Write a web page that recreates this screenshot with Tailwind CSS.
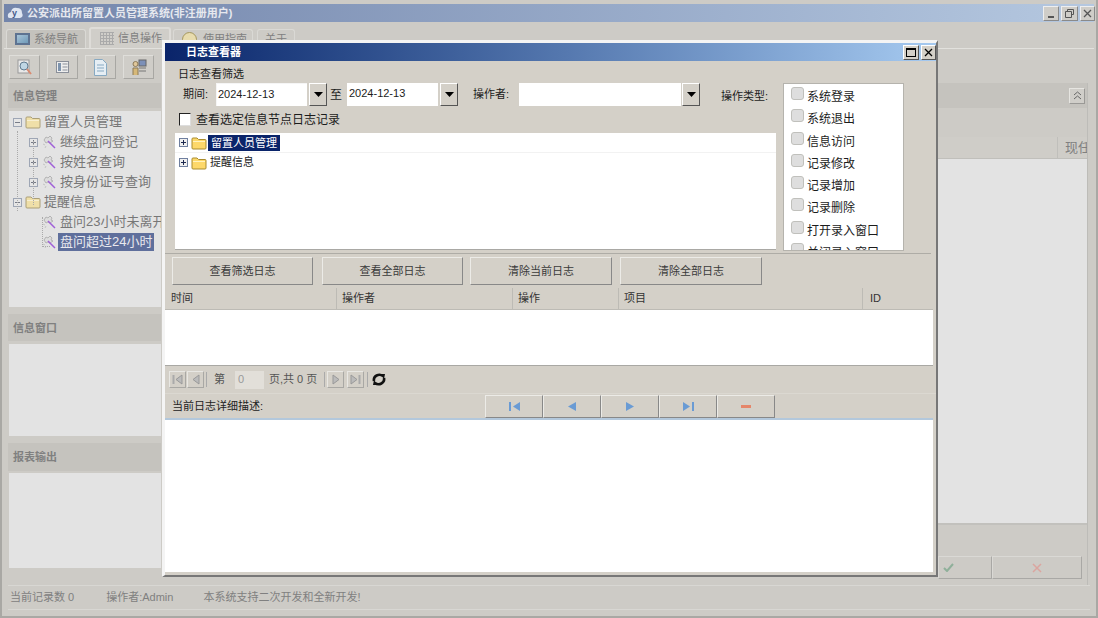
<!DOCTYPE html>
<html lang="zh-CN">
<head>
    <meta charset="UTF-8">
    <title>公安派出所留置人员管理系统</title>
    <script src="https://cdn.jsdelivr.net/npm/@tailwindcss/browser@4"></script>
</head>
<body class="w-[1098px] h-[618px] overflow-hidden bg-[#cdcbc6] text-[11px] text-[#808080] font-['Liberation_Sans','Noto_Sans_CJK_SC',sans-serif]">

<svg class="hidden">
    <symbol id="folder" viewBox="0 0 16 14">
        <path d="M1 12V3q0-1 1-1h4l1.500 1.500H14q1 0 1 1V12q0 1-1 1H2q-1 0-1-1z" fill="#fdd86a" stroke="#a98c2e"/>
        <path d="M2 5.500h12" stroke="#fff3c0"/>
    </symbol>
    <symbol id="folder-dim" viewBox="0 0 16 14">
        <path d="M1 12V3q0-1 1-1h4l1.500 1.500H14q1 0 1 1V12q0 1-1 1H2q-1 0-1-1z" fill="#efdfa8" stroke="#ab9f78"/>
        <path d="M2 5.500h12" stroke="#f7efd2"/>
    </symbol>
    <symbol id="plus" viewBox="0 0 9 9">
        <rect x=".5" y=".5" width="8" height="8" fill="#f0f0f0" stroke="#6f7f9f"/>
        <path d="M2 4.500h5M4.500 2v5" stroke="#1d2a50"/>
    </symbol>
    <symbol id="plus-dim" viewBox="0 0 9 9">
        <rect x=".5" y=".5" width="8" height="8" fill="#e6e6e6" stroke="#9ea6b5"/>
        <path d="M2 4.500h5M4.500 2v5" stroke="#777c88"/>
    </symbol>
    <symbol id="minus-dim" viewBox="0 0 9 9">
        <rect x=".5" y=".5" width="8" height="8" fill="#e6e6e6" stroke="#9ea6b5"/>
        <path d="M2 4.500h5" stroke="#777c88"/>
    </symbol>
    <symbol id="wand" viewBox="0 0 14 14">
        <path d="M2 5l2-3 2 1 2-2 2 2-1 2 2 1-3 2-2-1-2 1z" fill="#dcdcdc" stroke="#b4b4b4"/>
        <path d="M6 6l7 7" stroke="#a060d8" stroke-width="1.500"/>
        <path d="M1 9l2 1M3 13l1-2" stroke="#c4c4c4"/>
    </symbol>
    <symbol id="arrow" viewBox="0 0 9 5"><path d="M0 0h9L4.500 5z" fill="#000"/></symbol>
</svg>

<!-- 主窗口 -->
<div class="h-[618px] flex flex-col pt-[4px] px-[2px] border-x-2 border-b-2 border-[#a9a8a4]">
    <div class="h-[18px] shrink-0 flex items-center bg-gradient-to-r from-[#7385ab] to-[#b5c8e0] text-[#e6e8ee] font-bold pl-[3px]">
        <svg class="w-[17px] h-[14px] mr-[3px] shrink-0" viewBox="0 0 17 14"><path d="M1 11q-1-4 3-5 1-5 6-4 5 0 5 5 2 4-2 5H3q-2 0-2-1z" fill="#dfe6f2"/><text x="5" y="10" font-size="9" font-weight="700" fill="#44598a" font-family="Liberation Sans">y</text></svg>
        <span class="flex-1">公安派出所留置人员管理系统(非注册用户)</span>
        <div class="flex gap-[2px] mr-[-1px]">
            <div class="w-[16px] h-[15px] bg-[#cfcdc8] border border-t-[#eee] border-l-[#eee] border-r-[#8a8a8a] border-b-[#8a8a8a] flex items-end justify-center pb-[2px]"><div class="w-[6px] h-[2px] bg-[#555]"></div></div>
            <div class="w-[17px] h-[15px] bg-[#cfcdc8] border border-t-[#eee] border-l-[#eee] border-r-[#8a8a8a] border-b-[#8a8a8a] flex items-center justify-center">
                <svg class="w-[9px] h-[9px]" viewBox="0 0 9 9" fill="none" stroke="#555"><path d="M2.500 2.500V.5h6v5h-2M.5 2.500h6v6h-6z"/></svg>
            </div>
            <div class="w-[15px] h-[15px] bg-[#cfcdc8] border border-t-[#eee] border-l-[#eee] border-r-[#8a8a8a] border-b-[#8a8a8a] flex items-center justify-center">
                <svg class="w-[9px] h-[9px]" viewBox="0 0 9 9" fill="none" stroke="#555" stroke-width="1.300"><path d="M1 1l7 7M8 1l-7 7"/></svg>
            </div>
        </div>
    </div>

    <!-- 标签页 -->
    <div class="h-[21px] mt-[6px] shrink-0 flex items-end pl-[2px] border-b border-[#e2e1dd] whitespace-nowrap">
        <div class="w-[80px] h-[19px] flex items-center gap-[4px] pl-[8px] bg-[#c4c2bd] border-t border-x border-[#dad9d5] rounded-t-[3px]">
            <div class="w-[15px] h-[12px] border-2 border-[#5e7391] bg-gradient-to-br from-[#a8c4d8] to-[#6f9ab8]"></div><span>系统导航</span>
        </div>
        <div class="w-[82px] h-[21px] ml-[3px] flex items-center gap-[4px] pl-[9px] bg-[#d0cec9] border-t-2 border-x-2 border-[#dedcd8] rounded-t-[3px]">
            <div class="w-[14px] h-[13px] bg-[repeating-linear-gradient(0deg,#aaa_0_1px,transparent_1px_3px),repeating-linear-gradient(90deg,#aaa_0_1px,transparent_1px_3px)]"></div><span>信息操作</span>
        </div>
        <div class="w-[80px] h-[19px] ml-[2px] flex items-center gap-[6px] pl-[8px] border-t border-x border-[#dad9d5] rounded-t-[3px]">
            <div class="w-[15px] h-[15px] rounded-full bg-[#e8dcae] border border-[#a5975f]"></div><span>使用指南</span>
        </div>
        <div class="w-[38px] h-[19px] ml-[4px] flex items-center justify-center border-t border-x border-[#dad9d5] rounded-t-[3px]">关于</div>
    </div>

    <!-- 工具栏 -->
    <div class="h-[24px] mt-[6px] shrink-0 flex gap-[7px] pl-[5px]">
        <div class="w-[31px] bg-[#cfcdc8] border border-[#dfdeda] border-r-[#a8a7a3] border-b-[#a8a7a3] flex items-center justify-center">
            <svg class="w-[17px] h-[17px]" viewBox="0 0 17 17"><rect x="2" y="1" width="11" height="13" fill="#e8e8e8" stroke="#999"/><circle cx="8" cy="7" r="4" fill="#bfd6e4" stroke="#607b90"/><path d="M11 10l4 5" stroke="#d98a70" stroke-width="2"/></svg>
        </div>
        <div class="w-[31px] bg-[#cfcdc8] border border-[#dfdeda] border-r-[#a8a7a3] border-b-[#a8a7a3] flex items-center justify-center">
            <svg class="w-[13px] h-[12px]" viewBox="0 0 13 12"><rect x=".5" y=".5" width="12" height="11" fill="#eee" stroke="#8a8f99"/><rect x="2" y="2" width="3" height="8" fill="#7d93ad"/><path d="M6.500 3h5M6.500 6h5M6.500 9h5" stroke="#8a8f99"/></svg>
        </div>
        <div class="w-[31px] bg-[#cfcdc8] border border-[#dfdeda] border-r-[#a8a7a3] border-b-[#a8a7a3] flex items-center justify-center">
            <svg class="w-[13px] h-[17px]" viewBox="0 0 13 17"><path d="M.5.5h8l4 4v12H.5z" fill="#e6eef4" stroke="#87a9c2"/><path d="M3 6h7M3 9h7M3 12h7" stroke="#87a9c2"/></svg>
        </div>
        <div class="w-[31px] bg-[#cfcdc8] border border-[#dfdeda] border-r-[#a8a7a3] border-b-[#a8a7a3] flex items-center justify-center">
            <svg class="w-[16px] h-[17px]" viewBox="0 0 16 17"><rect x="8" y="1" width="7" height="6" fill="#7c90b8" stroke="#666"/><path d="M8 9h7M8 12h7" stroke="#777"/><circle cx="4.500" cy="5" r="2.500" fill="#e0c79a" stroke="#8c7a58"/><path d="M2 16V9h5v7" fill="#d6b878" stroke="#8c7a58"/></svg>
        </div>
    </div>

    <div class="flex-1 flex mt-[4px] min-h-0">
        <!-- 左侧栏 -->
        <div class="w-[153px] ml-[4px] shrink-0 flex flex-col">
            <div class="h-[25px] shrink-0 flex items-center pl-[5px] pt-[2px] bg-[#c5c3be] font-bold">信息管理</div>
            <div class="relative h-[196px] mt-[3px] ml-[1px] pt-[1px] shrink-0 bg-[#e3e3e3] overflow-hidden text-[13px] text-[#777] whitespace-nowrap">
                <div class="absolute left-[8px] top-[20px] h-[80px] border-l border-dotted border-[#aaa]"></div>
                <div class="absolute left-[24px] top-[30px] h-[64px] border-l border-dotted border-[#aaa]"></div>
                <div class="absolute left-[33px] top-[106px] h-[30px] w-[8px] border-l border-b border-dotted border-[#aaa]"></div>
                <div class="h-[20px] flex items-center pl-[4px] gap-[3px]"><svg class="w-[9px] h-[9px] shrink-0"><use href="#minus-dim"/></svg><svg class="w-[16px] h-[14px] shrink-0"><use href="#folder-dim"/></svg><span>留置人员管理</span></div>
                <div class="h-[20px] flex items-center pl-[20px] gap-[4px]"><svg class="w-[9px] h-[9px] shrink-0"><use href="#plus-dim"/></svg><svg class="w-[14px] h-[14px] shrink-0"><use href="#wand"/></svg><span>继续盘问登记</span></div>
                <div class="h-[20px] flex items-center pl-[20px] gap-[4px]"><svg class="w-[9px] h-[9px] shrink-0"><use href="#plus-dim"/></svg><svg class="w-[14px] h-[14px] shrink-0"><use href="#wand"/></svg><span>按姓名查询</span></div>
                <div class="h-[20px] flex items-center pl-[20px] gap-[4px]"><svg class="w-[9px] h-[9px] shrink-0"><use href="#plus-dim"/></svg><svg class="w-[14px] h-[14px] shrink-0"><use href="#wand"/></svg><span>按身份证号查询</span></div>
                <div class="h-[20px] flex items-center pl-[4px] gap-[3px]"><svg class="w-[9px] h-[9px] shrink-0"><use href="#minus-dim"/></svg><svg class="w-[16px] h-[14px] shrink-0"><use href="#folder-dim"/></svg><span>提醒信息</span></div>
                <div class="h-[20px] flex items-center pl-[33px] gap-[4px]"><svg class="w-[14px] h-[14px] shrink-0"><use href="#wand"/></svg><span>盘问23小时未离开</span></div>
                <div class="h-[20px] flex items-center pl-[33px] gap-[2px]"><svg class="w-[14px] h-[14px] shrink-0"><use href="#wand"/></svg><span class="px-[2px] h-[18px] leading-[18px] bg-[#5f6f9c] text-[#e8e8ee]">盘问超过24小时</span></div>
            </div>
            <div class="h-[27px] mt-[7px] shrink-0 flex items-center pl-[5px] pt-[1px] bg-[#c5c3be] font-bold">信息窗口</div>
            <div class="h-[92px] mt-[3px] ml-[1px] shrink-0 bg-[#e3e3e3]"></div>
            <div class="h-[28px] mt-[7px] shrink-0 flex items-center pl-[5px] bg-[#c5c3be] font-bold">报表输出</div>
            <div class="h-[95px] mt-[2px] ml-[1px] shrink-0 bg-[#e3e3e3]"></div>
        </div>
        <div class="flex-1"></div>
        <!-- 右侧内容 -->
        <div class="w-[150px] shrink-0 flex flex-col mr-[6px] border-r border-[#bdbcb8]">
            <div class="h-[25px] shrink-0 flex items-center justify-end pr-[2px] bg-[#c5c3be]">
                <div class="w-[16px] h-[16px] bg-[#d0cec9] border border-[#e6e5e1] border-r-[#9a9996] border-b-[#9a9996] flex items-center justify-center">
                    <svg class="w-[9px] h-[9px]" viewBox="0 0 9 9" fill="none" stroke="#666"><path d="M1 4l3.500-3L8 4M1 8l3.500-3L8 8"/></svg>
                </div>
            </div>
            <div class="h-[29px] shrink-0"></div>
            <div class="h-[22px] shrink-0 flex justify-end bg-[#cfcdc8] border-b border-[#c0bfbb] text-[13px]">
                <div class="w-[30px] border-l border-[#c0bfbb] pl-[7px] leading-[21px] overflow-hidden whitespace-nowrap">现任</div>
            </div>
            <div class="h-[366px] shrink-0 bg-[#e3e3e3] border-b-2 border-[#c2c1bd]"></div>
            <div class="h-[31px] shrink-0"></div>
            <div class="h-[23px] shrink-0 flex mr-[5px]">
                <div class="w-[54px] border border-[#dad9d5] border-r-[#a9a8a5] border-b-[#a9a8a5] flex items-center pl-[4px]">
                    <svg class="w-[11px] h-[9px]" viewBox="0 0 11 9" fill="none" stroke="#8fb09a" stroke-width="2"><path d="M1 5l3 3 6-7"/></svg>
                </div>
                <div class="flex-1 border border-[#dad9d5] border-r-[#a9a8a5] border-b-[#a9a8a5] flex items-center justify-center">
                    <svg class="w-[10px] h-[10px]" viewBox="0 0 10 10" fill="none" stroke="#dba59f" stroke-width="1.500"><path d="M1 1l8 8M9 1l-8 8"/></svg>
                </div>
            </div>
        </div>
    </div>

    <!-- 状态栏 -->
    <div class="h-[25px] mb-[6px] mx-[4px] shrink-0 flex items-center gap-[32px] pl-[2px] border-t border-b border-[#d8d7d3] whitespace-nowrap">
        <span>当前记录数 0</span><span>操作者:Admin</span><span class="ml-[-2px]">本系统支持二次开发和全新开发!</span>
    </div>
</div>

<!-- 日志查看器 对话框 -->
<div class="absolute left-[162px] top-[40px] w-[776px] h-[537px] flex flex-col bg-[#d4d0c8] border-t-[3px] border-l-[3px] border-t-[#f4f4f4] border-l-[#f4f4f4] border-r-2 border-b-2 border-r-[#777] border-b-[#777] text-[#1c1c1c]">
    <div class="h-[18px] shrink-0 flex items-center bg-gradient-to-r from-[#0a246a] to-[#a6caf0] text-white font-bold pl-[21px]">
        <span class="flex-1">日志查看器</span>
        <div class="flex gap-[2px]">
            <div class="w-[16px] h-[15px] bg-[#d4d0c8] border border-t-white border-l-white border-r-[#555] border-b-[#555] flex items-center justify-center"><div class="w-[10px] h-[9px] border border-t-2 border-black"></div></div>
            <div class="w-[15px] h-[15px] bg-[#d4d0c8] border border-t-white border-l-white border-r-[#555] border-b-[#555] flex items-center justify-center">
                <svg class="w-[9px] h-[9px]" viewBox="0 0 9 9" fill="none" stroke="#000" stroke-width="1.300"><path d="M1 1l7 7M8 1l-7 7"/></svg>
            </div>
        </div>
    </div>

    <div class="h-[192px] shrink-0 flex pt-[4px]">
        <div class="w-[610px] shrink-0">
            <div class="h-[18px] pl-[13px] leading-[18px]">日志查看筛选</div>
            <div class="h-[23px] flex items-center pl-[18px]">
                <span class="w-[33px] whitespace-nowrap">期间:</span>
                <div class="w-[91px] h-[23px] bg-white pl-[1px] leading-[21px] border-t border-l border-[#f5f5f5]">2024-12-13</div>
                <div class="w-[18px] h-[23px] ml-[2px] bg-[#d4d0c8] border border-t-white border-l-white border-r-[#555] border-b-[#555] flex items-center justify-center"><svg class="w-[9px] h-[5px]"><use href="#arrow"/></svg></div>
                <span class="w-[20px] pl-[3px] text-[12px]">至</span>
                <div class="w-[91px] h-[23px] bg-white pl-[2px] leading-[21px]">2024-12-13</div>
                <div class="w-[18px] h-[23px] ml-[2px] bg-[#d4d0c8] border border-t-white border-l-white border-r-[#555] border-b-[#555] flex items-center justify-center"><svg class="w-[9px] h-[5px]"><use href="#arrow"/></svg></div>
                <span class="w-[46px] ml-[15px] whitespace-nowrap">操作者:</span>
                <div class="w-[162px] h-[23px] bg-white"></div>
                <div class="w-[18px] h-[23px] ml-[1px] bg-[#d4d0c8] border border-t-white border-l-white border-r-[#555] border-b-[#555] flex items-center justify-center"><svg class="w-[9px] h-[5px]"><use href="#arrow"/></svg></div>
                <span class="ml-[21px] mt-[3px] whitespace-nowrap">操作类型:</span>
            </div>
            <div class="h-[27px] flex items-center pl-[14px] gap-[5px] text-[12px] whitespace-nowrap">
                <div class="w-[12px] h-[13px] bg-white border border-[#222] border-b-[#ddd] border-r-[#ddd]"></div>
                <span>查看选定信息节点日志记录</span>
            </div>
            <div class="h-[117px] ml-[10px] w-[601px] bg-white border-b border-[#a9a8a4] text-[11px] whitespace-nowrap">
                <div class="h-[20px] flex items-center pl-[4px] border-b border-[#f2f2f2] gap-[3px]">
                    <svg class="w-[9px] h-[9px] shrink-0"><use href="#plus"/></svg><svg class="w-[16px] h-[14px] shrink-0"><use href="#folder"/></svg>
                    <span class="px-[3px] ml-[-2px] h-[16px] leading-[16px] bg-[#0a246a] text-white">留置人员管理</span>
                </div>
                <div class="h-[19px] flex items-center pl-[4px] gap-[3px]">
                    <svg class="w-[9px] h-[9px] shrink-0"><use href="#plus"/></svg><svg class="w-[16px] h-[14px] shrink-0"><use href="#folder"/></svg>
                    <span>提醒信息</span>
                </div>
            </div>
        </div>
        <div class="w-[121px] h-[168px] ml-[8px] mt-[18px] shrink-0 bg-white border border-[#b5b3ad] overflow-hidden text-[12px] whitespace-nowrap pt-[3px] pl-[7px]">
            <div class="h-[22.300px] flex gap-[3px]"><div class="w-[13px] h-[13px] bg-[#dedede] border border-[#c0c0bc] rounded-[3px]"></div><span class="mt-[1px]">系统登录</span></div>
            <div class="h-[22.300px] flex gap-[3px]"><div class="w-[13px] h-[13px] bg-[#dedede] border border-[#c0c0bc] rounded-[3px]"></div><span class="mt-[1px]">系统退出</span></div>
            <div class="h-[22.300px] flex gap-[3px]"><div class="w-[13px] h-[13px] bg-[#dedede] border border-[#c0c0bc] rounded-[3px]"></div><span class="mt-[1px]">信息访问</span></div>
            <div class="h-[22.300px] flex gap-[3px]"><div class="w-[13px] h-[13px] bg-[#dedede] border border-[#c0c0bc] rounded-[3px]"></div><span class="mt-[1px]">记录修改</span></div>
            <div class="h-[22.300px] flex gap-[3px]"><div class="w-[13px] h-[13px] bg-[#dedede] border border-[#c0c0bc] rounded-[3px]"></div><span class="mt-[1px]">记录增加</span></div>
            <div class="h-[22.300px] flex gap-[3px]"><div class="w-[13px] h-[13px] bg-[#dedede] border border-[#c0c0bc] rounded-[3px]"></div><span class="mt-[1px]">记录删除</span></div>
            <div class="h-[22.300px] flex gap-[3px]"><div class="w-[13px] h-[13px] bg-[#dedede] border border-[#c0c0bc] rounded-[3px]"></div><span class="mt-[1px]">打开录入窗口</span></div>
            <div class="h-[22.300px] flex gap-[3px]"><div class="w-[13px] h-[13px] bg-[#dedede] border border-[#c0c0bc] rounded-[3px]"></div><span class="mt-[1px]">关闭录入窗口</span></div>
        </div>
    </div>

    <!-- 操作按钮 -->
    <div class="h-[35px] shrink-0 flex items-start pt-[3px] pl-[7px] mr-[5px] border-t border-[#aeaca6] text-[#3a3a3a]">
        <button class="w-[141px] h-[28px] border border-[#ecebe7] border-r-[#888] border-b-[#888] bg-[#d4d0c8]">查看筛选日志</button>
        <button class="w-[141px] h-[28px] ml-[9px] border border-[#ecebe7] border-r-[#888] border-b-[#888] bg-[#d4d0c8]">查看全部日志</button>
        <button class="w-[142px] h-[28px] ml-[7px] border border-[#ecebe7] border-r-[#888] border-b-[#888] bg-[#d4d0c8]">清除当前日志</button>
        <button class="w-[142px] h-[28px] ml-[8px] border border-[#ecebe7] border-r-[#888] border-b-[#888] bg-[#d4d0c8]">清除全部日志</button>
    </div>

    <!-- 日志列表 -->
    <div class="h-[22px] shrink-0 flex mr-[3px] border-b border-[#bdbbb5] leading-[21px] text-[#333]">
        <div class="w-[172px] pl-[6px] border-r border-[#bdbbb5]">时间</div>
        <div class="w-[176px] pl-[5px] border-r border-[#bdbbb5]">操作者</div>
        <div class="w-[106px] pl-[5px] border-r border-[#bdbbb5]">操作</div>
        <div class="w-[244px] pl-[5px] border-r border-[#bdbbb5]">项目</div>
        <div class="flex-1 pl-[7px]">ID</div>
    </div>
    <div class="h-[56px] shrink-0 mr-[3px] bg-white border-b border-[#a9a8a4]"></div>

    <!-- 分页 -->
    <div class="h-[27px] shrink-0 flex items-center text-[#555] whitespace-nowrap">
        <div class="w-[17px] h-[17px] ml-[4px] border border-[#e8e7e3] border-r-[#a9a8a4] border-b-[#a9a8a4] flex items-center justify-center"><svg class="w-[11px] h-[11px]" viewBox="0 0 11 11"><path d="M1.500 1v9" stroke="#aaa" stroke-width="2"/><path d="M10 1v9L4 5.500z" fill="#bbb" stroke="#999"/></svg></div>
        <div class="w-[17px] h-[17px] ml-[1px] border border-[#e8e7e3] border-r-[#a9a8a4] border-b-[#a9a8a4] flex items-center justify-center"><svg class="w-[8px] h-[11px]" viewBox="0 0 8 11"><path d="M7 1v9L1 5.500z" fill="#bbb" stroke="#999"/></svg></div>
        <div class="w-px h-[15px] ml-[2px] bg-[#aaa]"></div>
        <span class="w-[20px] ml-[7px]">第</span>
        <div class="w-[29px] h-[18px] ml-[1px] bg-[#e2dfd9] pl-[3px] leading-[17px] text-[#999]">0</div>
        <span class="ml-[5px]">页,共 0 页</span>
        <div class="w-px h-[15px] ml-[7px] bg-[#aaa]"></div>
        <div class="w-[17px] h-[17px] ml-[2px] border border-[#e8e7e3] border-r-[#a9a8a4] border-b-[#a9a8a4] flex items-center justify-center"><svg class="w-[8px] h-[11px]" viewBox="0 0 8 11"><path d="M1 1v9l6-4.500z" fill="#bbb" stroke="#999"/></svg></div>
        <div class="w-[17px] h-[17px] ml-[3px] border border-[#e8e7e3] border-r-[#a9a8a4] border-b-[#a9a8a4] flex items-center justify-center"><svg class="w-[11px] h-[11px]" viewBox="0 0 11 11"><path d="M1 1v9l6-4.500z" fill="#bbb" stroke="#999"/><path d="M9.500 1v9" stroke="#aaa" stroke-width="2"/></svg></div>
        <div class="w-px h-[15px] ml-[3px] bg-[#aaa]"></div>
        <svg class="w-[14px] h-[13px] ml-[4px]" viewBox="0 0 14 13" fill="none" stroke="#111" stroke-width="2.600"><path d="M2 8C1 3 7 0 11 3"/><path d="M12 5c1 5-5 8-9 5"/><path d="M8 1l5 0-1 5zM6 12l-5 0 1-5z" fill="#111" stroke="none"/></svg>
    </div>

    <!-- 当前日志详细描述 -->
    <div class="h-[25px] shrink-0 flex items-center pl-[7px] border-t border-[#dbd8d1]">
        <span class="w-[313px] whitespace-nowrap text-[#222]">当前日志详细描述:</span>
        <button class="w-[58px] h-[23px] border border-[#ecebe7] border-r-[#888] border-b-[#888] flex items-center justify-center"><svg class="w-[11px] h-[9px]" viewBox="0 0 11 9"><path d="M1 0v9" stroke="#6a9bd4" stroke-width="2"/><path d="M11 0v9L4 4.500z" fill="#6a9bd4"/></svg></button>
        <button class="w-[58px] h-[23px] border border-[#ecebe7] border-r-[#888] border-b-[#888] flex items-center justify-center"><svg class="w-[8px] h-[9px]" viewBox="0 0 8 9"><path d="M8 0v9L0 4.500z" fill="#6a9bd4"/></svg></button>
        <button class="w-[58px] h-[23px] border border-[#ecebe7] border-r-[#888] border-b-[#888] flex items-center justify-center"><svg class="w-[8px] h-[9px]" viewBox="0 0 8 9"><path d="M0 0v9l8-4.500z" fill="#6a9bd4"/></svg></button>
        <button class="w-[58px] h-[23px] border border-[#ecebe7] border-r-[#888] border-b-[#888] flex items-center justify-center"><svg class="w-[11px] h-[9px]" viewBox="0 0 11 9"><path d="M0 0v9l7-4.500z" fill="#6a9bd4"/><path d="M10 0v9" stroke="#6a9bd4" stroke-width="2"/></svg></button>
        <button class="w-[58px] h-[23px] border border-[#ecebe7] border-r-[#888] border-b-[#888] flex items-center justify-center"><div class="w-[10px] h-[3px] bg-[#e5866a]"></div></button>
    </div>
    <div class="h-[154px] shrink-0 mr-[3px] bg-white border-t-2 border-[#b3c8dc]"></div>
</div>

</body>
</html>
